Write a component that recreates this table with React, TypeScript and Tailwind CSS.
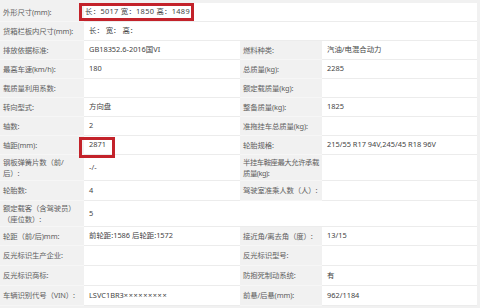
import React from 'react'

type Cell = { label: React.ReactNode; value?: React.ReactNode }
type Row = { h: number; left: Cell; right?: Cell }

const rows: Row[] = [
  { h: 22, left: { label: '外形尺寸(mm):', value: <span className="-ml-[4px] tracking-[0.3px]">长：5017 宽：1850 高：1489</span> } },
  { h: 19, left: { label: '货箱栏板内尺寸(mm):', value: '长： 宽： 高：' } },
  { h: 19, left: { label: '排放依据标准:', value: 'GB18352.6-2016国VI' }, right: { label: '燃料种类:', value: '汽油/电混合动力' } },
  { h: 19, left: { label: '最高车速(km/h):', value: '180' }, right: { label: '总质量(kg):', value: '2285' } },
  { h: 19, left: { label: '载质量利用系数:' }, right: { label: '额定载质量(kg):' } },
  { h: 19, left: { label: '转向型式:', value: '方向盘' }, right: { label: '整备质量(kg):', value: '1825' } },
  { h: 19, left: { label: '轴数:', value: '2' }, right: { label: '准拖挂车总质量(kg):' } },
  { h: 19, left: { label: '轴距(mm):', value: '2871' }, right: { label: '轮胎规格:', value: '215/55 R17 94V,245/45 R18 96V' } },
  {
    h: 26,
    left: { label: <>钢板弹簧片数（前/<br />后）:</>, value: '-/-' },
    right: { label: <span className="tracking-[-0.5px]">半挂车鞍座最大允许承载<br />质量(kg):</span> },
  },
  { h: 20, left: { label: '轮胎数:', value: '4' }, right: { label: '驾驶室准乘人数（人）:' } },
  { h: 26, left: { label: <>额定载客（含驾驶员）<br />（座位数）:</>, value: '5' } },
  { h: 19, left: { label: '轮距（前/后)mm:', value: '前轮距:1586 后轮距:1572' }, right: { label: '接近角/离去角（度）:', value: '13/15' } },
  { h: 20, left: { label: '反光标识生产企业:' }, right: { label: '反光标识型号:' } },
  { h: 20, left: { label: '反光标识商标:' }, right: { label: '防抱死制动系统:', value: '有' } },
  {
    h: 20,
    left: { label: '车辆识别代号（VIN）:', value: <span>LSVC1BR3<span className="tracking-[0.6px]">×××××××××</span></span> },
    right: { label: '前悬/后悬(mm):', value: '962/1184' },
  },
]

function Label({ children }: { children: React.ReactNode }) {
  return (
    <div className="flex items-center bg-[#f1f1f1] pl-[3px] text-[#606060] leading-[11px] whitespace-nowrap tracking-[-0.15px] border-b border-[#f6f6f6]">
      <div>{children}</div>
    </div>
  )
}

function Value({ children, span }: { children?: React.ReactNode; span?: boolean }) {
  return (
    <div className={`flex items-center bg-white pl-[5px] text-[#444] whitespace-nowrap border-b border-[#ececec] ${span ? 'col-span-3' : ''}`}>
      {children}
    </div>
  )
}

export default function App() {
  return (
    <div
      className="relative w-[480px] h-[308px] overflow-hidden bg-[#f1f1f1] text-[7.4px]"
      style={{ fontFamily: '"Noto Sans", "Noto Sans CJK SC", sans-serif' }}
    >
      <div className="w-[477px]">
        {rows.map((r, i) => (
          <div
            key={i}
            className={`grid grid-cols-[84px_156px_82px_155px] ${i === 0 ? 'pt-[3px]' : ''}`}
            style={{ height: r.h }}
          >
            <Label>{r.left.label}</Label>
            <Value span={!r.right}>{r.left.value}</Value>
            {r.right && (
              <>
                <Label>{r.right.label}</Label>
                <Value>{r.right.value}</Value>
              </>
            )}
          </div>
        ))}
      </div>

      {/* highlight boxes */}
      <div className="absolute left-[79px] top-[3px] w-[115px] h-[18px] border-[3px] border-[#c3222a]" />
      <div className="absolute left-[79px] top-[137px] w-[36px] h-[21px] border-[3px] border-[#c3222a]" />
    </div>
  )
}
